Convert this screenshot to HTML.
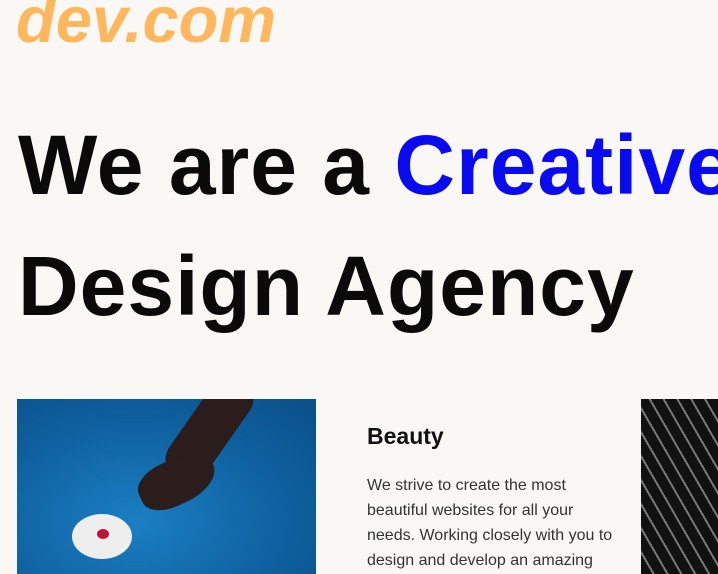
<!DOCTYPE html>
<html><head><style>
html,body{margin:0;padding:0;background:#f9f8f5;width:718px;height:574px;overflow:hidden;position:relative;font-family:"Liberation Sans",sans-serif}
.logo{position:absolute;left:16px;top:-18px;font-size:65px;font-weight:bold;font-style:italic;color:#ffb75e;line-height:75px;white-space:nowrap}
.h{position:absolute;left:18px;font-size:84px;font-weight:bold;color:#0a0a0a;white-space:nowrap;line-height:100px;letter-spacing:1px}
.h span{color:#0a0af0}
.img1{position:absolute;left:17px;top:399px;width:299px;height:175px;background:radial-gradient(ellipse at 40% 70%,#1b7fc2,#0e5f9e 60%,#0a4f88);overflow:hidden}
.arm{position:absolute;left:170px;top:-30px;width:45px;height:120px;background:#2a1d1b;transform:rotate(35deg);border-radius:25px}
.hand{position:absolute;left:120px;top:60px;width:80px;height:45px;background:#2a1d1b;transform:rotate(-25deg);border-radius:40% 50% 50% 40%}
.fl{position:absolute;left:55px;top:115px;width:60px;height:45px;background:#eee;border-radius:50%}
.fc{position:absolute;left:80px;top:130px;width:12px;height:10px;background:#c0103a;border-radius:50%}
.img2{position:absolute;left:641px;top:399px;width:77px;height:175px;background:repeating-linear-gradient(60deg,#111 0 10px,#777 10px 12px),#111}
h3{position:absolute;left:367px;top:423px;margin:0;font-size:23px;font-weight:bold;color:#111}
p{position:absolute;left:367px;top:473px;margin:0;font-size:16px;line-height:25px;color:#333;white-space:nowrap}
</style></head><body>
<div class="logo">dev.com</div>
<div class="h" style="top:115px">We are a <span>Creative</span></div>
<div class="h" style="top:236px">Design Agency</div>
<div class="img1"><div class="arm"></div><div class="hand"></div><div class="fl"></div><div class="fc"></div></div>
<div class="img2"></div>
<h3>Beauty</h3>
<p>We strive to create the most<br>beautiful websites for all your<br>needs. Working closely with you to<br>design and develop an amazing</p>
</body></html>
